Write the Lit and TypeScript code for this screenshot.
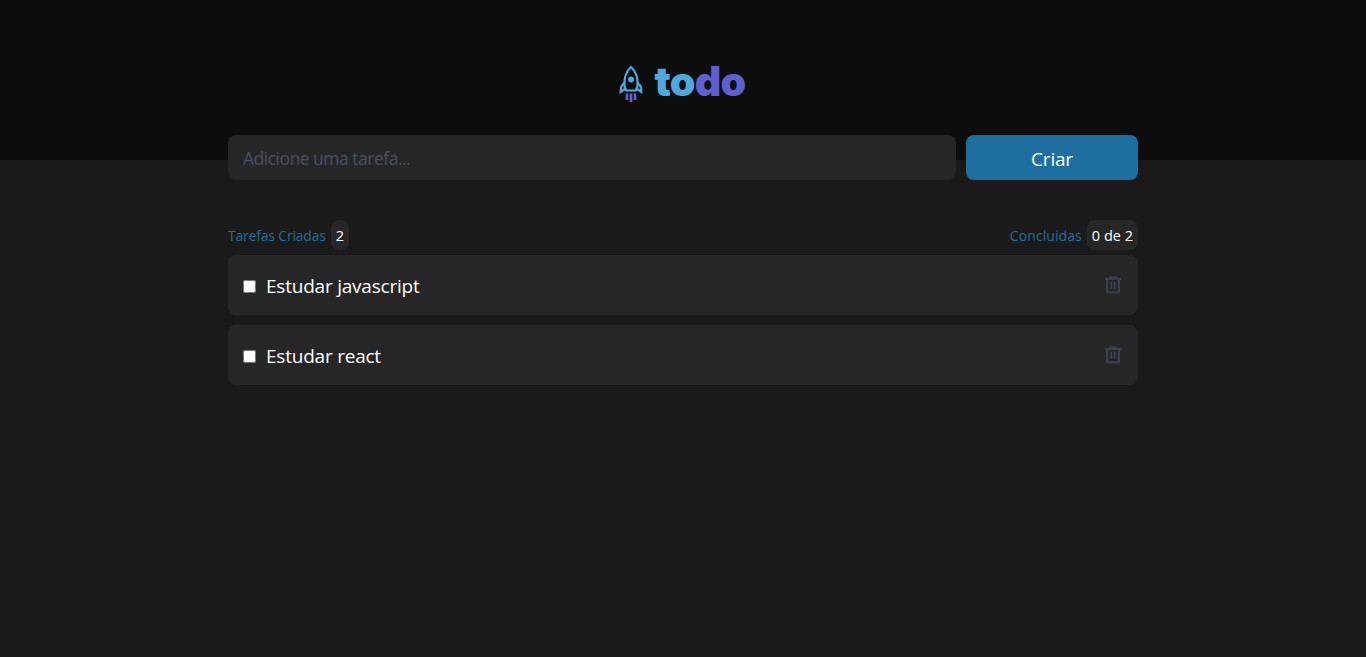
import { LitElement, html, css } from "lit";
import { customElement, property, state } from "lit/decorators.js";

interface Task {
  id: number;
  title: string;
  done: boolean;
}

@customElement("todo-header")
class TodoHeader extends LitElement {
  static styles = css`
    :host { display: flex; justify-content: center; height: 160px; background: #0d0d0d; }
    .logo { display: flex; height: 39px; margin: 64px 2px 0 0; gap: 12px; }
    .rocket { display: block; width: 24px; height: 39px; }
    .word { font: 900 41px/34px Inter, sans-serif; letter-spacing: -0.7px; width: 91px; white-space: nowrap; color: #4ea8de; }
    .accent { color: #5e60ce; }
  `;
  render() {
    return html`<div class="logo">
      <svg class="rocket" viewBox="0 0 24 39" fill="none">
        <path d="M7.200 26.500 5.600 22.500C4.800 14 7 7.500 12 3c5 4.500 7.200 11 6.400 19.500L16.800 26.500Z" stroke="#4ea8de" stroke-width="2.200"/>
        <path d="M5.600 18.500 2.500 22.200Q1.500 24 1.700 28L6.700 24.500M18.400 18.500l3.100 3.700q1 1.800.8 5.800L17.300 24.500" stroke="#4ea8de" stroke-width="2.200"/>
        <circle cx="12" cy="15.500" r="3" fill="#4ea8de"/>
        <path d="M8 29.500v6.500M12 29.500v8.500M16 29.500v6.500" stroke="#5e60ce" stroke-width="2.700"/>
      </svg>
      <span class="word">to<span class="accent">do</span></span>
    </div>`;
  }
}

@customElement("todo-item")
class TodoItem extends LitElement {
  @property({ attribute: false }) task!: Task;
  static styles = css`
    :host { display: flex; align-items: center; box-sizing: border-box; height: 60px; padding: 0 15px; border-radius: 8px; background: #262626; }
    .check { width: 13px; height: 13px; margin: 3px 10px 0 0; }
    .title { flex: 1; font-size: 19px; line-height: 26px; padding-top: 2px; color: #fff; letter-spacing: -0.22px; }
    .remove { display: flex; padding: 0; border: 0; background: none; color: #374151; }
    .icon { display: block; width: 20px; height: 20px; }
  `;
  render() {
    return html`<input class="check" type="checkbox" .checked=${this.task.done}
        @change=${() => this.dispatchEvent(new CustomEvent("toggle"))} />
      <span class="title">${this.task.title}</span>
      <button class="remove" aria-label="Remover" @click=${() => this.dispatchEvent(new CustomEvent("remove"))}>
        <svg class="icon" viewBox="0 0 20 20" fill="none" stroke="currentColor">
          <path d="M2 4h16M6 2.500h8" stroke-width="1.800"/>
          <path d="M4 4v13.300h12V4" stroke-width="2"/>
          <path d="M8.300 7v7M11.700 7v7" stroke-width="1.700"/>
        </svg>
      </button>`;
  }
}

@customElement("app-root")
class AppRoot extends LitElement {
  @state() private tasks: Task[] = [
    { id: 1, title: "Estudar javascript", done: false },
    { id: 2, title: "Estudar react", done: false },
  ];
  @state() private draft = "";

  static styles = css`
    :host { display: block; min-height: 100vh; background: #1a1a1a; font-family: "Open Sans", "Noto Sans", sans-serif; }
    .page { width: 910px; margin: -25px auto 0; position: relative; }
    .form { display: flex; gap: 10px; height: 45px; }
    .field { flex: 1; min-width: 0; box-sizing: border-box; padding: 1px 15px 0; border: 0; border-radius: 8px; background: #262626; color: #fff; font: 400 17.500px "Open Sans", sans-serif; letter-spacing: -0.5px; }
    .field::placeholder { color: #465161; opacity: 1; }
    .create { width: 172px; padding: 2px 0 0; border: 0; border-radius: 8px; background: #1e6f9f; color: #fff; font: 400 19px "Open Sans", sans-serif; letter-spacing: -0.2px; }
    .summary { display: flex; justify-content: space-between; margin-top: 40px; height: 30px; }
    .stat { display: flex; align-items: center; gap: 5px; line-height: 32px; height: 30px; color: #1e6f9f; }
    .label { height: 30px; font-size: 14px; letter-spacing: -0.2px; }
    .label.wide { letter-spacing: 0.08px; }
    .badge { height: 30px; padding: 0 5px; border-radius: 8px; background: #262626; color: #fff; font-size: 14.500px; white-space: nowrap; }
    .list { display: grid; gap: 10px; margin-top: 5px; }
  `;

  private add(e: Event) {
    e.preventDefault();
    if (!this.draft.trim()) return;
    this.tasks = [...this.tasks, { id: Date.now(), title: this.draft.trim(), done: false }];
    this.draft = "";
  }

  render() {
    const done = this.tasks.filter((t) => t.done).length;
    return html`<todo-header></todo-header>
      <main class="page">
        <form class="form" @submit=${this.add}>
          <input class="field" placeholder="Adicione uma tarefa..." .value=${this.draft}
            @input=${(e: Event) => (this.draft = (e.target as HTMLInputElement).value)} />
          <button class="create">Criar</button>
        </form>
        <div class="summary">
          <div class="stat"><span class="label">Tarefas Criadas</span><span class="badge">${this.tasks.length}</span></div>
          <div class="stat"><span class="label wide">Concluídas</span><span class="badge">${done} de ${this.tasks.length}</span></div>
        </div>
        <div class="list">
          ${this.tasks.map((task) => html`<todo-item .task=${task}
            @toggle=${() => (this.tasks = this.tasks.map((t) => (t.id === task.id ? { ...t, done: !t.done } : t)))}
            @remove=${() => (this.tasks = this.tasks.filter((t) => t.id !== task.id))}></todo-item>`)}
        </div>
      </main>`;
  }
}
